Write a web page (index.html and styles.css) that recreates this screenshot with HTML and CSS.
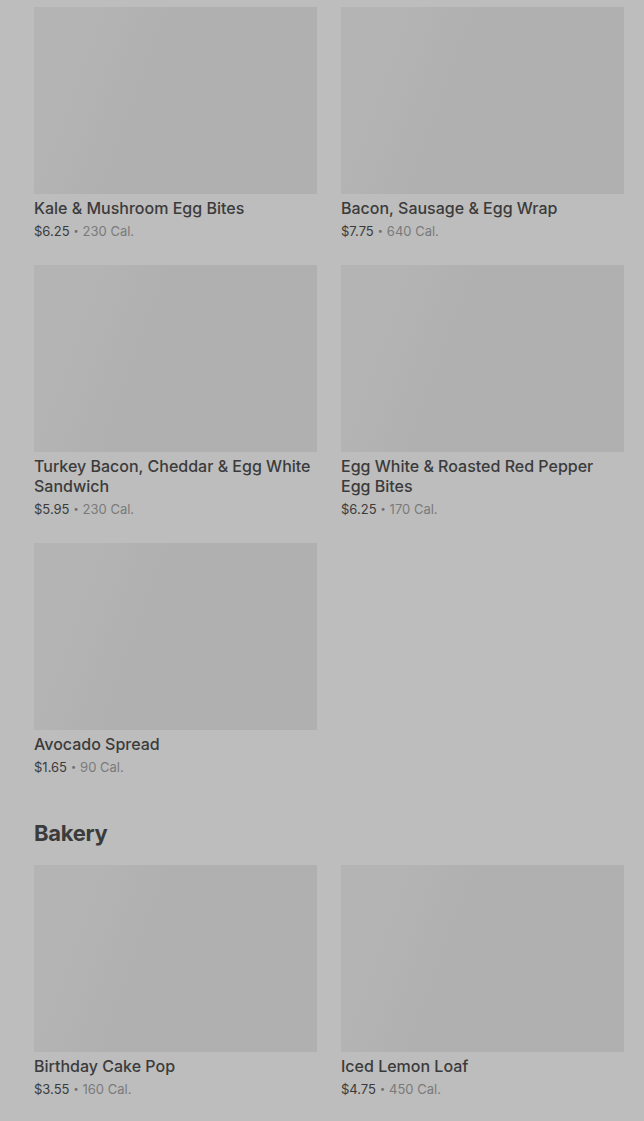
FILE: index.html
```html
<!DOCTYPE html>
<html lang="en">
<head>
<meta charset="utf-8">
<title>Menu</title>
<link rel="stylesheet" href="styles.css">
</head>
<body>
<main class="menu">
  <section class="section">
    <div class="grid">
      <div class="card"><div class="thumb"></div><div class="name">Kale &amp; Mushroom Egg Bites</div><div class="meta"><span class="price">$6.25</span><span class="dot">•</span><span class="cal">230 Cal.</span></div></div>
      <div class="card"><div class="thumb"></div><div class="name">Bacon, Sausage &amp; Egg Wrap</div><div class="meta"><span class="price">$7.75</span><span class="dot">•</span><span class="cal">640 Cal.</span></div></div>
      <div class="card"><div class="thumb"></div><div class="name">Turkey Bacon, Cheddar &amp; Egg White Sandwich</div><div class="meta"><span class="price">$5.95</span><span class="dot">•</span><span class="cal">230 Cal.</span></div></div>
      <div class="card"><div class="thumb"></div><div class="name">Egg White &amp; Roasted Red Pepper Egg Bites</div><div class="meta"><span class="price">$6.25</span><span class="dot">•</span><span class="cal">170 Cal.</span></div></div>
      <div class="card"><div class="thumb"></div><div class="name">Avocado Spread</div><div class="meta"><span class="price">$1.65</span><span class="dot">•</span><span class="cal">90 Cal.</span></div></div>
    </div>
  </section>
  <section class="section">
    <h2 class="heading">Bakery</h2>
    <div class="grid">
      <div class="card"><div class="thumb"></div><div class="name">Birthday Cake Pop</div><div class="meta"><span class="price">$3.55</span><span class="dot">•</span><span class="cal">160 Cal.</span></div></div>
      <div class="card"><div class="thumb"></div><div class="name">Iced Lemon Loaf</div><div class="meta"><span class="price">$4.75</span><span class="dot">•</span><span class="cal">450 Cal.</span></div></div>
    </div>
  </section>
</main>
</body>
</html>
```

FILE: styles.css
```css
html, body {
  margin: 0;
  padding: 0;
  background: #bdbdbd;
  overflow: hidden;
}
body {
  font-family: Inter, Roboto, "Liberation Sans", sans-serif;
  color: #3b3b3b;
}
.menu {
  padding: 7px 20px 0 34px;
}
.grid {
  display: grid;
  grid-template-columns: 283px 283px;
  column-gap: 24px;
  row-gap: 24px;
}
.card {
  display: flex;
  flex-direction: column;
}
.thumb {
  height: 187px;
  background: linear-gradient(110deg, #b4b4b4 0%, #b4b4b4 18%, #b0b0b0 40%, #b0b0b0 100%);
}
.name {
  margin-top: 4px;
  font-size: 16px;
  line-height: 20px;
  font-weight: 500;
  color: #3b3b3b;
}
.meta {
  margin-top: 3px;
  font-size: 13px;
  line-height: 20px;
  display: flex;
  align-items: center;
  gap: 4px;
}
.price {
  color: #3b3b3b;
}
.dot {
  color: #6e6e6e;
  font-size: 9px;
}
.cal {
  color: #7a7a7a;
}
.section + .section {
  margin-top: 42px;
}
.heading {
  margin: 0 0 18px;
  font-size: 22px;
  line-height: 28px;
  font-weight: 700;
  color: #3b3b3b;
  letter-spacing: -0.3px;
}
```
